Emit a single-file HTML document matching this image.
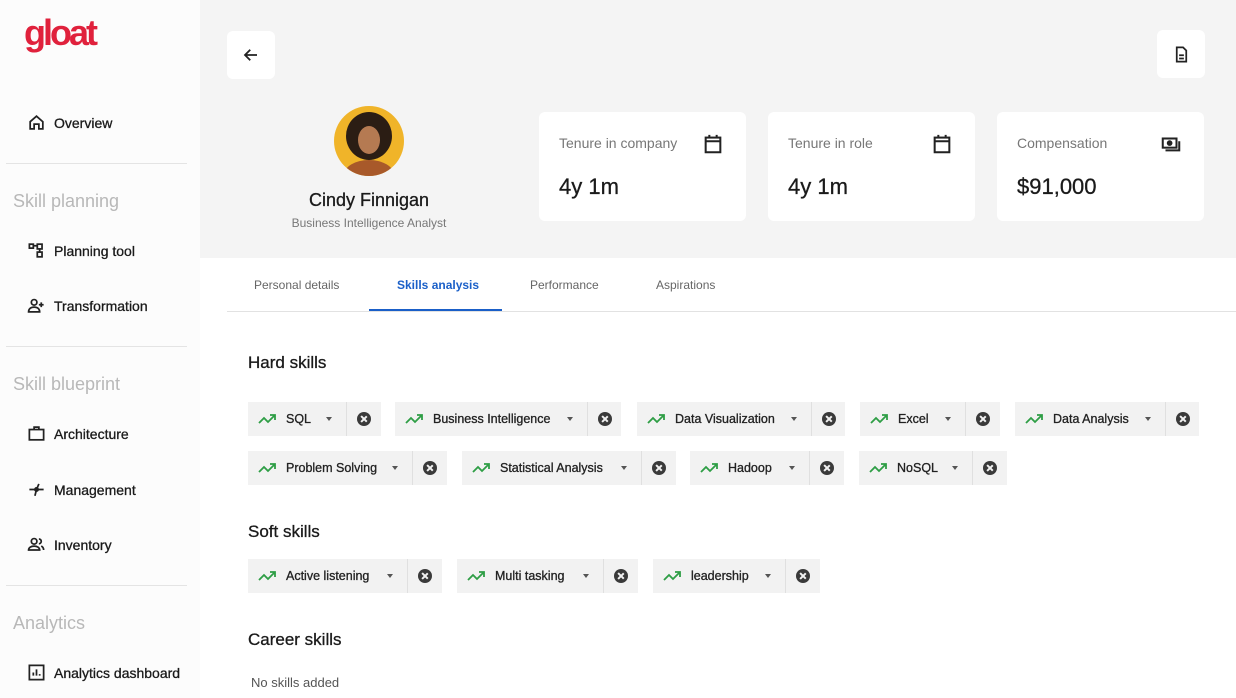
<!DOCTYPE html>
<html><head><meta charset="utf-8"><style>
*{margin:0;padding:0;box-sizing:border-box}
body{width:1236px;height:698px;overflow:hidden;background:#fff;font-family:"Liberation Sans",sans-serif;color:#222;position:relative}
.abs{position:absolute}
.side{left:0;top:0;width:200px;height:698px;background:#fcfcfc}
.nav{position:absolute;left:27px;font-size:14px;color:#1a1a1a;display:flex;align-items:center;gap:8px;-webkit-text-stroke:0.3px #1a1a1a}
.nav svg{width:19px;height:19px}
.sec{position:absolute;left:13px;font-size:18px;color:#b8b8b8}
.div{position:absolute;left:6px;width:181px;height:1px;background:#e4e4e4}
.head{left:200px;top:0;width:1036px;height:258px;background:#f4f4f4}
.btn{position:absolute;background:#fff;border-radius:6px;width:48px;height:48px;display:flex;align-items:center;justify-content:center}
.card{position:absolute;top:112px;width:207px;height:109px;background:#fff;border-radius:6px}
.card .l{position:absolute;left:20px;top:23px;font-size:14px;color:#777}
.card .v{position:absolute;left:20px;top:62px;font-size:22px;color:#1a1a1a;-webkit-text-stroke:0.3px #1a1a1a}
.card svg{position:absolute;right:22px;top:21px;width:22px;height:22px}
.tab{position:absolute;top:278px;font-size:12px;color:#666}
h3{position:absolute;left:248px;font-size:17px;font-weight:normal;color:#1a1a1a;-webkit-text-stroke:0.3px #1a1a1a}
.chip{position:absolute;height:34px;background:#f2f2f2;display:flex;align-items:center;font-size:12.5px;color:#222}
.chip .a{display:flex;align-items:center;height:100%;padding-left:10px;border-right:1px solid #e0e0e0;position:relative}
.chip .a svg{width:19px;height:12px;margin-right:9px}
.chip .a .t{-webkit-text-stroke:0.3px #222}
.chip .c{position:absolute;top:15px;width:0;height:0;border-left:3.5px solid transparent;border-right:3.5px solid transparent;border-top:4px solid #555}
.chip .x{flex:1;display:flex;align-items:center;justify-content:center}
.x i{display:block;width:14px;height:14px;border-radius:50%;background:#3a3a3a;position:relative}
.x i:before,.x i:after{content:"";position:absolute;left:6.2px;top:3px;width:1.6px;height:8px;background:#f2f2f2;transform:rotate(45deg)}
.x i:after{transform:rotate(-45deg)}
</style></head><body>
<div class="abs side"></div>
<div class="abs" style="left:24px;top:12px;font-size:36px;font-weight:bold;color:#e0213c;letter-spacing:-3px;font-family:'Liberation Sans',sans-serif">gloat</div>

<div class="nav" style="top:113px"><svg viewBox="0 0 24 24" fill="none" stroke="#222" stroke-width="2.2"><path d="M4 11l8-7 8 7v9h-5v-6H9v6H4z"/></svg>Overview</div>
<div class="div" style="top:163px"></div>
<div class="sec" style="top:191px">Skill planning</div>
<div class="nav" style="top:241px"><svg viewBox="0 0 24 24" fill="none" stroke="#222" stroke-width="2.2"><rect x="3" y="4" width="5" height="5"/><rect x="13" y="4" width="6" height="6"/><rect x="13" y="14" width="6" height="6"/><path d="M8 6h5M16 10v4"/></svg>Planning tool</div>
<div class="nav" style="top:296px"><svg viewBox="0 0 24 24" fill="none" stroke="#222" stroke-width="2.2"><circle cx="9" cy="8" r="3.5"/><path d="M2 20c0-4 3-6 7-6s7 2 7 6zM18 8v6M15 11h6"/></svg>Transformation</div>
<div class="div" style="top:346px"></div>
<div class="sec" style="top:374px">Skill blueprint</div>
<div class="nav" style="top:424px"><svg viewBox="0 0 24 24" fill="none" stroke="#222" stroke-width="2.2"><rect x="3" y="7" width="18" height="13"/><path d="M9 7V4h6v3"/></svg>Architecture</div>
<div class="nav" style="top:480px"><svg viewBox="0 0 24 24" fill="none" stroke="#222" stroke-width="2.2"><path d="M3 12h18M12 12l-2 8M12 12l3-7"/><circle cx="12" cy="12" r="2" fill="#222"/></svg>Management</div>
<div class="nav" style="top:535px"><svg viewBox="0 0 24 24" fill="none" stroke="#222" stroke-width="2.2"><circle cx="9" cy="8" r="3.5"/><path d="M2 19c0-3 3-5 7-5s7 2 7 5zM15 5a3 3 0 010 6M18 14c2 1 3 3 3 5"/></svg>Inventory</div>
<div class="div" style="top:585px"></div>
<div class="sec" style="top:613px">Analytics</div>
<div class="nav" style="top:663px"><svg viewBox="0 0 24 24" fill="none" stroke="#222" stroke-width="2.2"><rect x="3" y="3" width="18" height="18"/><path d="M8 16v-4M12 16V8M16 16v-2"/></svg>Analytics dashboard</div>

<div class="abs head"></div>
<div class="btn" style="left:227px;top:31px"><svg width="18" height="18" viewBox="0 0 24 24" fill="none" stroke="#222" stroke-width="2.4"><path d="M20 12H5M11 5l-7 7 7 7"/></svg></div>
<div class="btn" style="left:1157px;top:30px"><svg width="19" height="19" viewBox="0 0 24 24" fill="none" stroke="#222" stroke-width="2.2"><path d="M6 3h8l4 4v14H6z"/><path d="M9 13h6M9 17h6"/></svg></div>

<div class="abs" style="left:334px;top:106px;width:70px;height:70px;border-radius:50%;background:#f0b429;overflow:hidden">
<div style="position:absolute;left:12px;top:6px;width:46px;height:48px;border-radius:50%;background:#2b1d14"></div>
<div style="position:absolute;left:24px;top:20px;width:22px;height:28px;border-radius:50%;background:#b57a52"></div>
<div style="position:absolute;left:10px;top:54px;width:50px;height:30px;border-radius:50%;background:#a8592a"></div>
</div>
<div class="abs" style="left:269px;top:190px;width:200px;text-align:center;font-size:18px;color:#1a1a1a;-webkit-text-stroke:0.3px #1a1a1a">Cindy Finnigan</div>
<div class="abs" style="left:269px;top:216px;width:200px;text-align:center;font-size:12px;color:#777">Business Intelligence Analyst</div>

<div class="card" style="left:539px"><div class="l">Tenure in company</div><div class="v">4y 1m</div><svg viewBox="0 0 24 24" fill="none" stroke="#222" stroke-width="2.2"><rect x="4" y="5" width="16" height="16"/><path d="M4 9h16M8 2v4M16 2v4"/></svg></div>
<div class="card" style="left:768px"><div class="l">Tenure in role</div><div class="v">4y 1m</div><svg viewBox="0 0 24 24" fill="none" stroke="#222" stroke-width="2.2"><rect x="4" y="5" width="16" height="16"/><path d="M4 9h16M8 2v4M16 2v4"/></svg></div>
<div class="card" style="left:997px"><div class="l">Compensation</div><div class="v">$91,000</div><svg viewBox="0 0 24 24" fill="none" stroke="#222" stroke-width="2.2"><rect x="3" y="6" width="15" height="10"/><circle cx="10.5" cy="11" r="2" fill="#222"/><path d="M21 9v10H6"/></svg></div>

<div class="tab" style="left:254px">Personal details</div>
<div class="tab" style="left:397px;color:#1a5fc8;font-weight:bold">Skills analysis</div>
<div class="tab" style="left:530px">Performance</div>
<div class="tab" style="left:656px">Aspirations</div>
<div class="abs" style="left:227px;top:311px;width:1009px;height:1px;background:#e2e2e2"></div>
<div class="abs" style="left:369px;top:309px;width:133px;height:2px;background:#1a5fc8"></div>

<h3 style="top:353px">Hard skills</h3>
<h3 style="top:522px">Soft skills</h3>
<h3 style="top:630px">Career skills</h3>
<div class="abs" style="left:251px;top:675px;font-size:13px;color:#555">No skills added</div>

<svg width="0" height="0" style="position:absolute"><defs><symbol id="tr" viewBox="0 0 19 12"><path d="M1 10l5-5 4 4 7-7M12 2h5v5" fill="none" stroke="#2e9e45" stroke-width="1.8"/></symbol></defs></svg>

<div id="chips"></div>
<script>
var d=[[248,402,381,347,"SQL"],[395,402,621,588,"Business Intelligence"],[637,402,845,812,"Data Visualization"],[860,402,1000,966,"Excel"],[1015,402,1199,1166,"Data Analysis"],
[248,451,447,413,"Problem Solving"],[462,451,676,642,"Statistical Analysis"],[690,451,844,810,"Hadoop"],[859,451,1007,973,"NoSQL"],
[248,559,442,408,"Active listening"],[457,559,638,604,"Multi tasking"],[653,559,820,786,"leadership"]];
var h="";d.forEach(function(c){var w=c[2]-c[0],a=c[3]-c[0];
h+='<div class="chip" style="left:'+c[0]+'px;top:'+c[1]+'px;width:'+w+'px"><div class="a" style="width:'+a+'px"><svg><use href="#tr"/></svg><span class="t">'+c[4]+'</span><span class="c" style="left:'+(a-21)+'px"></span></div><div class="x"><i></i></div></div>';});
document.getElementById("chips").innerHTML=h;
</script>
</body></html>
